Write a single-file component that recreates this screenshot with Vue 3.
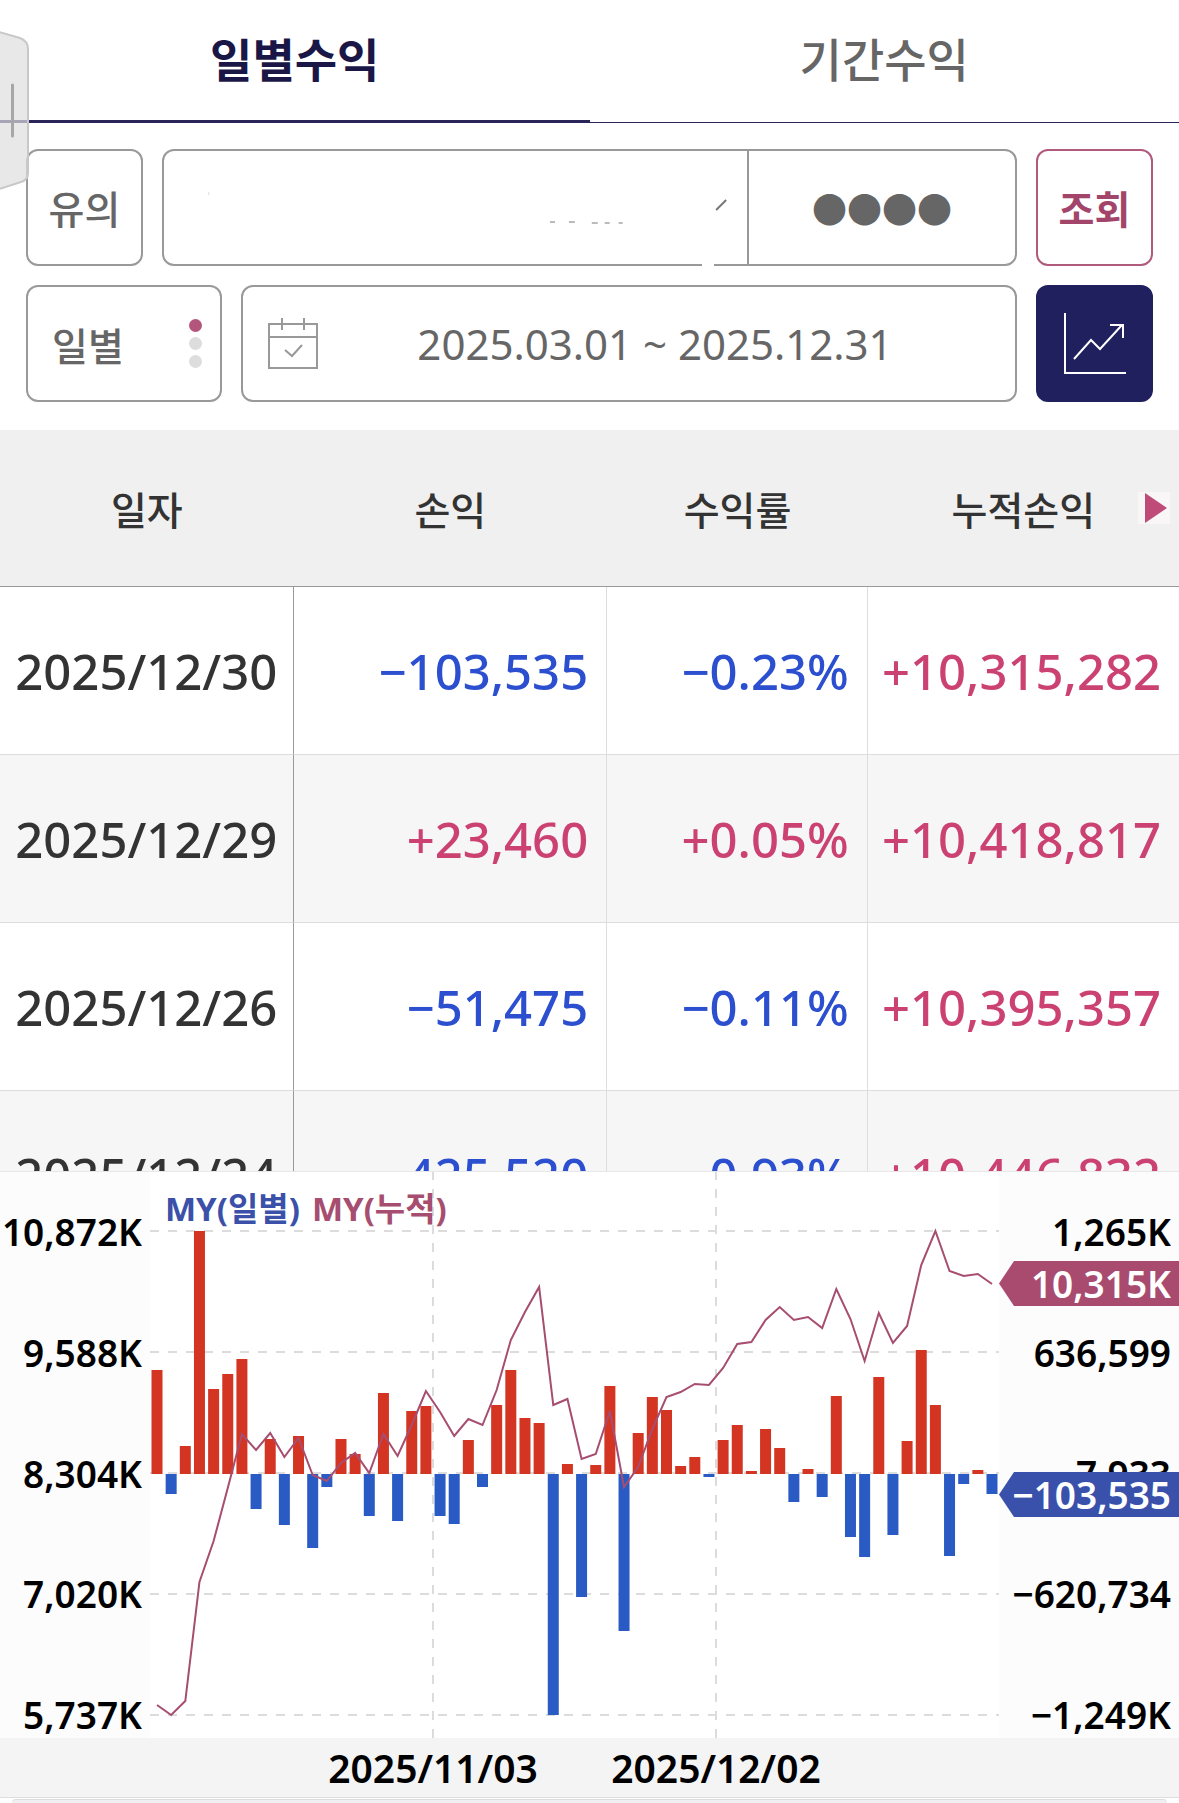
<template>
  <main class="profit-page">
    <!-- 왼쪽 서랍 손잡이 -->
    <svg class="drawer-handle" viewBox="0 0 30 160" aria-hidden="true">
      <path
        d="M-4 0 L20 7 Q28 10 28 18 L28 142 Q28 149 21 151 L-4 159 Z"
        fill="#dedede"
        fill-opacity="0.7"
        stroke="#c8c8c8"
        stroke-width="2"
      />
      <path d="M12.500 54 V105" stroke="#a6a6a6" stroke-width="3" stroke-linecap="round" />
    </svg>

    <nav class="tabs">
      <button
        v-for="tab in tabs"
        :key="tab"
        type="button"
        class="tab"
        :class="{ active: tab === selectedTab }"
        @click="selectedTab = tab"
      >
        {{ tab }}
      </button>
    </nav>

    <section class="filters">
      <div class="filter-row">
        <button type="button" class="box small">유의</button>
        <div class="box account">
          <button type="button" class="account-number" aria-label="계좌 선택">
            <svg viewBox="0 0 586 113" aria-hidden="true">
              <path d="M45 41 v3" stroke="#ddd" />
              <path
                d="M388 71 h5 M407 71 h6 M430 72 h6 M443 72 h5 M457 72 h4"
                stroke="#bbb"
                stroke-width="2"
              />
              <path d="M555 59 L565 49" stroke="#777" stroke-width="2" />
            </svg>
          </button>
          <input class="password" type="text" value="●●●●" aria-label="비밀번호" readonly />
        </div>
        <button type="button" class="box small search">조회</button>
      </div>

      <div class="filter-row">
        <button type="button" class="box unit">
          일별
          <span class="unit-dots">
            <i class="on"></i>
            <i></i>
            <i></i>
          </span>
        </button>
        <button type="button" class="box period">
          <svg class="calendar" viewBox="0 0 52 52" fill="none" stroke="#999" stroke-width="2">
            <path d="M2 6 H50 V50 H2 Z M2 19 H50 M15 0 V12 M37 0 V12" />
            <path d="M18 32 L25 38 L35 27" />
          </svg>
          <span class="period-text">2025.03.01 ~ 2025.12.31</span>
        </button>
        <button type="button" class="box small chart-toggle" aria-label="차트">
          <svg viewBox="0 0 62 62" fill="none" stroke="#fff" stroke-width="2">
            <path d="M1 0 V60 H62" />
            <path d="M10 46 L27 27 L36 36 L58 12 M46 12 H59 V25" />
          </svg>
        </button>
      </div>
    </section>

    <section class="table-area">
      <table>
        <colgroup>
          <col class="col-date" />
          <col class="col-profit" />
          <col class="col-rate" />
          <col class="col-total" />
        </colgroup>
        <thead>
          <tr>
            <th>일자</th>
            <th>손익</th>
            <th>수익률</th>
            <th>
              누적손익
              <svg class="next" viewBox="0 0 32 32" aria-hidden="true">
                <rect width="32" height="32" fill="#f8f6f7" />
                <path d="M7 1 L29 16 L7 31 Z" fill="#bf4b78" />
              </svg>
            </th>
          </tr>
        </thead>
        <tbody>
          <tr v-for="row in rows" :key="row.date">
            <td class="date">{{ row.date }}</td>
            <td :class="signClass(row.profit)">{{ row.profit }}</td>
            <td :class="signClass(row.rate)">{{ row.rate }}</td>
            <td :class="signClass(row.total)">{{ row.total }}</td>
          </tr>
        </tbody>
      </table>
    </section>

    <section class="chart">
      <div class="axis left">
        <span v-for="label in totalAxis" :key="label">{{ label }}</span>
      </div>
      <div class="plot">
        <svg viewBox="0 1 849 566" preserveAspectRatio="none">
          <g stroke="#dcdcdc" stroke-width="2" stroke-dasharray="9 9">
            <path v-for="y in gridY" :key="y" :d="`M0 ${y} H849`" />
            <path v-for="x in gridX" :key="x" :d="`M${x} 0 V567`" />
          </g>
          <rect
            v-for="(bar, i) in bars"
            :key="i"
            :x="bar.x"
            :y="bar.y"
            width="11"
            :height="bar.height"
            :fill="bar.color"
          />
          <polyline :points="totalLine" fill="none" stroke="#a64d70" stroke-width="2" />
        </svg>
        <p class="legend">
          <span class="legend-daily">MY(일별)</span>
          <span class="legend-total">MY(누적)</span>
        </p>
      </div>
      <div class="axis right">
        <span v-for="label in dailyAxis" :key="label">{{ label }}</span>
        <strong class="badge total">10,315K</strong>
        <strong class="badge daily">−103,535</strong>
      </div>
    </section>

    <div class="x-axis">
      <div class="x-labels">
        <span>2025/11/03</span>
        <span>2025/12/02</span>
      </div>
    </div>
    <div class="bottom-sheet"></div>
  </main>
</template>

<script setup>
import { computed, ref } from 'vue'

const tabs = ['일별수익', '기간수익']
const selectedTab = ref('일별수익')

const rows = [
  { date: '2025/12/30', profit: '−103,535', rate: '−0.23%', total: '+10,315,282' },
  { date: '2025/12/29', profit: '+23,460', rate: '+0.05%', total: '+10,418,817' },
  { date: '2025/12/26', profit: '−51,475', rate: '−0.11%', total: '+10,395,357' },
  { date: '2025/12/24', profit: '−425,520', rate: '−0.93%', total: '+10,446,832' }
]

const signClass = (value) => (value.startsWith('+') ? 'plus' : 'minus')

const totalAxis = ['10,872K', '9,588K', '8,304K', '7,020K', '5,737K']
const dailyAxis = ['1,265K', '636,599', '7,933', '−620,734', '−1,249K']

const gridY = [60, 181, 302, 423, 544]
const gridX = [283, 566]

// 0 기준선에서의 막대 높이
const baseline = 303
const daily = [
  104, -20, 28, 243, 85, 100, 115, -35, 35, -51, 38, -74, -13, 35, 20, -42, 81, -47, 63, 68,
  -42, -50, 34, -13, 69, 104, 56, 51, -241, 10, -123, 9, 88, -157, 41, 77, 64, 8, 17, -3,
  34, 49, 3, 45, 26, -28, 5, -23, 78, -63, -83, 97, -61, 33, 124, 69, -82, -10, 4, -20
]

// 누적 손익 선의 y 좌표
const total = [
  534, 544, 530, 411, 370, 317, 263, 279, 262, 286, 267, 304, 310, 292, 282, 302, 263, 285, 254, 220,
  241, 265, 248, 254, 219, 169, 141, 116, 234, 228, 288, 283, 240, 316, 296, 258, 226, 221, 213, 214,
  197, 173, 171, 149, 136, 149, 146, 157, 118, 148, 190, 142, 172, 155, 94, 60, 100, 105, 103, 113
]

const pointX = (i) => 7 + (i * 835) / 59

const bars = computed(() =>
  daily.map((value, i) => ({
    x: pointX(i) - 5.5,
    y: value > 0 ? baseline - value : baseline,
    height: Math.abs(value),
    color: value > 0 ? '#d43522' : '#2a5bc4'
  }))
)

const totalLine = computed(() => total.map((y, i) => `${pointX(i)},${y}`).join(' '))
</script>

<style>
body {
  margin: 0;
  background-color: #fff;
}
</style>

<style scoped>
.profit-page {
  position: relative;
  overflow: hidden;
  font-family: 'Noto Sans', 'Noto Sans CJK KR', sans-serif;
  color: #333;
}
button,
input {
  margin: 0;
  padding: 0;
  border: 0;
  background: none;
  font-family: inherit;
  color: inherit;
}
.drawer-handle {
  position: absolute;
  top: 31px;
  left: 0;
  z-index: 1;
  width: 30px;
  height: 160px;
}

.tabs {
  display: flex;
  height: 123px;
}
.tab {
  flex: 1;
  padding-bottom: 8px;
  border-bottom: 1px solid #2a2458;
  font-size: 46px;
  font-weight: 500;
  color: #666;
}
.tab.active {
  padding-bottom: 6px;
  border-bottom-width: 3px;
  font-weight: 700;
  color: #1a1747;
}

.filters {
  display: flex;
  flex-direction: column;
  gap: 19px;
  padding: 26px 26px 28px;
}
.filter-row {
  display: flex;
  gap: 19px;
}
.box {
  display: flex;
  align-items: center;
  justify-content: center;
  box-sizing: border-box;
  height: 117px;
  padding-bottom: 2px;
  border: 2px solid #999;
  border-radius: 12px;
  font-size: 39px;
  font-weight: 500;
  color: #666;
}
.box.small {
  width: 117px;
}
.box.search {
  border-color: #b05a7c;
  font-weight: 700;
  color: #a3456b;
}
.box.account {
  position: relative;
  flex: 1;
  padding: 0;
}
/* 계좌 칸 아래 테두리의 빈 부분 */
.account::after {
  content: '';
  position: absolute;
  right: 301px;
  bottom: -2px;
  width: 12px;
  height: 2px;
  background-color: #fff;
}
.account-number {
  flex: 1;
  height: 100%;
}
.account-number svg {
  display: block;
  width: 100%;
  height: 100%;
}
.password {
  box-sizing: border-box;
  width: 268px;
  height: 100%;
  border-left: 2px solid #999;
  font-family: 'Noto Sans CJK KR', sans-serif;
  font-size: 35px;
  text-align: center;
}
.box.unit {
  justify-content: space-between;
  width: 196px;
  padding: 0 18px 0 24px;
}
.unit-dots {
  display: flex;
  flex-direction: column;
  gap: 5px;
}
.unit-dots i {
  width: 13px;
  height: 13px;
  border-radius: 50%;
  background-color: #ddd;
}
.unit-dots .on {
  background-color: #b4557b;
}
.box.period {
  flex: 1;
  padding: 0 24px;
}
.calendar {
  width: 52px;
  height: 52px;
}
.period-text {
  flex: 1;
  font-size: 42px;
  font-weight: 400;
}
.chart-toggle {
  border-color: #21205f;
  background-color: #21205f;
}
.box.chart-toggle {
  padding: 0;
  border-color: #21205f;
}
.chart-toggle svg {
  width: 62px;
  height: 62px;
}

.table-area {
  height: 741px;
  overflow: hidden;
}
table {
  width: 100%;
  table-layout: fixed;
  border-collapse: separate;
  border-spacing: 0;
}
.col-date {
  width: 24.9%;
}
.col-profit {
  width: 26.6%;
}
.col-rate {
  width: 22.1%;
}
th {
  position: relative;
  box-sizing: border-box;
  height: 157px;
  padding: 0;
  border-bottom: 1px solid #999;
  background-color: #f0f0f0;
  font-size: 39px;
  font-weight: 500;
}
.next {
  position: absolute;
  top: 62px;
  right: 9px;
  width: 32px;
  height: 32px;
}
td {
  box-sizing: border-box;
  height: 168px;
  padding: 0 18px 0 0;
  border-right: 1px solid #ddd;
  border-bottom: 1px solid #ddd;
  font-size: 49px;
  font-weight: 500;
  text-align: right;
  white-space: nowrap;
}
td:last-child {
  border-right: 0;
}
tr:nth-child(even) td {
  background-color: #f6f6f6;
}
td.date {
  padding: 0;
  border-right-color: #999;
  text-align: center;
}
.plus {
  color: #cb4272;
}
.minus {
  color: #2c4fcf;
}

.chart {
  display: grid;
  grid-template-columns: 150px 1fr 180px;
  height: 566px;
  border-top: 1px solid #e8e8e8;
}
.axis {
  position: relative;
  display: flex;
  flex-direction: column;
  justify-content: space-between;
  padding: 39px 8px 2px 0;
  background-color: #fcfcfc;
  font-size: 37px;
  font-weight: 600;
  line-height: 42px;
  text-align: right;
  color: #000;
}
.plot {
  position: relative;
  min-width: 0;
}
.plot svg {
  display: block;
  width: 100%;
  height: 566px;
}
.legend {
  position: absolute;
  top: 15px;
  left: 15px;
  display: flex;
  gap: 12px;
  margin: 0;
  font-size: 33px;
  font-weight: 700;
  line-height: 44px;
}
.legend-daily {
  color: #3b50a8;
}
.legend-total {
  color: #a64d70;
}
.badge {
  position: absolute;
  right: 0;
  left: 0;
  box-sizing: border-box;
  height: 45px;
  padding-right: 8px;
  clip-path: polygon(0 50%, 15px 0, 100% 0, 100% 100%, 15px 100%);
  font-weight: 600;
  line-height: 46px;
  color: #fff;
}
.badge.total {
  top: 89px;
  background-color: #a84b6f;
}
.badge.daily {
  top: 300px;
  background-color: #3a51ac;
}
.x-axis {
  display: grid;
  grid-template-columns: 150px 1fr 180px;
  height: 59px;
  border-bottom: 1px solid #ddd;
  background-color: #f4f4f4;
}
.x-labels {
  display: grid;
  grid-column: 2;
  grid-template-columns: 1fr 2fr 2fr 1fr;
  font-size: 39px;
  font-weight: 600;
  line-height: 60px;
  text-align: center;
  color: #000;
}
.x-labels span:first-child {
  grid-column: 2;
}
.bottom-sheet {
  height: 3px;
  margin: 1px 12px 0;
  border-top: 1px solid #ddd;
  border-radius: 24px 24px 0 0;
  background-color: #f0f0f2;
}
</style>
